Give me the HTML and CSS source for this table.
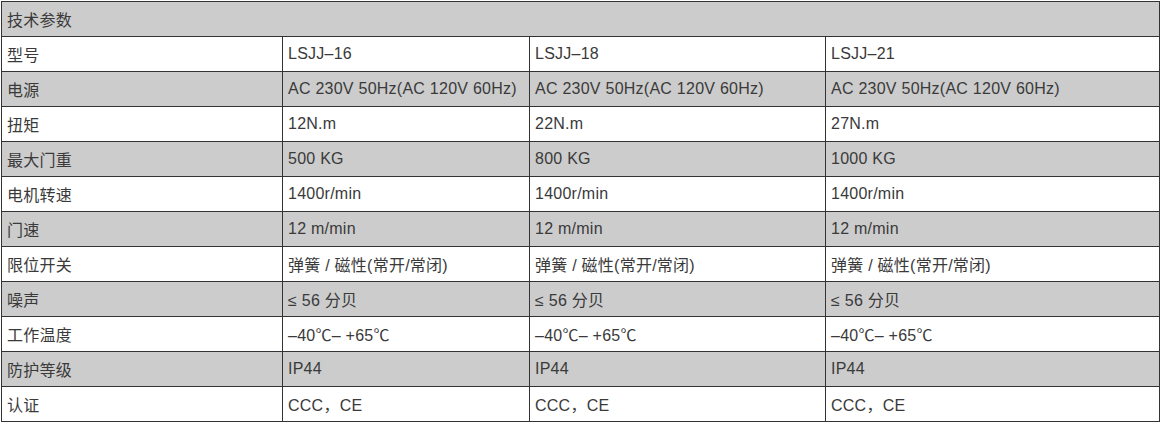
FILE: index.html
```html
<!DOCTYPE html>
<html lang="zh">
<head>
<meta charset="utf-8">
<link rel="stylesheet" href="styles.css">
</head>
<body>
<table class="spec">
  <colgroup>
    <col class="c1"><col class="c2"><col class="c3"><col class="c4">
  </colgroup>
  <tr class="gray"><td colspan="4">技术参数</td></tr>
  <tr><td>型号</td><td>LSJJ–16</td><td>LSJJ–18</td><td>LSJJ–21</td></tr>
  <tr class="gray"><td>电源</td><td>AC 230V 50Hz(AC 120V 60Hz)</td><td>AC 230V 50Hz(AC 120V 60Hz)</td><td>AC 230V 50Hz(AC 120V 60Hz)</td></tr>
  <tr><td>扭矩</td><td>12N.m</td><td>22N.m</td><td>27N.m</td></tr>
  <tr class="gray"><td>最大门重</td><td>500 KG</td><td>800 KG</td><td>1000 KG</td></tr>
  <tr><td>电机转速</td><td>1400r/min</td><td>1400r/min</td><td>1400r/min</td></tr>
  <tr class="gray"><td>门速</td><td>12 m/min</td><td>12 m/min</td><td>12 m/min</td></tr>
  <tr><td>限位开关</td><td>弹簧 / 磁性(常开/常闭)</td><td>弹簧 / 磁性(常开/常闭)</td><td>弹簧 / 磁性(常开/常闭)</td></tr>
  <tr class="gray"><td>噪声</td><td>≤ 56 分贝</td><td>≤ 56 分贝</td><td>≤ 56 分贝</td></tr>
  <tr><td>工作温度</td><td>–40℃– +65℃</td><td>–40℃– +65℃</td><td>–40℃– +65℃</td></tr>
  <tr class="gray"><td>防护等级</td><td>IP44</td><td>IP44</td><td>IP44</td></tr>
  <tr><td>认证</td><td>CCC，CE</td><td>CCC，CE</td><td>CCC，CE</td></tr>
</table>
</body>
</html>
```

FILE: styles.css
```css
html, body {
  margin: 0;
  padding: 0;
  background: #ffffff;
}
body {
  padding: 1px 0 0 1px;
}
.spec {
  border-collapse: collapse;
  table-layout: fixed;
  width: 1158px;
  font-family: "Liberation Sans", "Noto Sans CJK SC", sans-serif;
  font-size: 16px;
  letter-spacing: 0.25px;
  color: #3a3a3a;
}
.c1 { width: 281px; }
.c2 { width: 247px; }
.c3 { width: 296px; }
.c4 { width: 334px; }
.spec tr {
  height: 35px;
}
.spec td {
  border: 1px solid #333333;
  height: 35px;
  padding: 0 5px;
  box-sizing: border-box;
  vertical-align: middle;
  white-space: nowrap;
}
.spec tr.gray td {
  background: #cccccc;
}
```
